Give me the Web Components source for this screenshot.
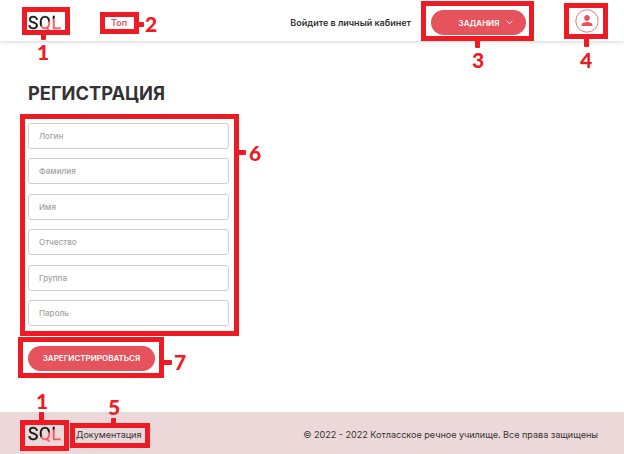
<!DOCTYPE html>
<html lang="ru">
<head>
<meta charset="utf-8">
<title>Регистрация</title>
<style>
body{margin:0;background:#fff;font-family:Inter,"Liberation Sans",sans-serif;color:#333}
</style>
</head>
<body>
<registration-page></registration-page>
<script>
const define=(name,html,setup)=>customElements.define(name,class extends HTMLElement{
  connectedCallback(){
    if(this.shadowRoot)return;
    const t=document.createElement('template');
    t.innerHTML=html;
    this.attachShadow({mode:'open'}).append(t.content.cloneNode(true));
    if(setup)setup(this);
  }
});

define('sql-logo',`<style>
:host{display:block;width:34px;height:18px;font:400 17.5px/18px Roboto,sans-serif;white-space:nowrap}
span{display:block;width:34px;height:18px;letter-spacing:.5px;color:transparent;background:linear-gradient(150deg,#111 0 50%,#fb5964 54%);-webkit-background-clip:text;background-clip:text;-webkit-text-stroke:.35px transparent}
</style><span><slot></slot></span>`);

define('pill-button',`<style>
:host{display:flex;align-items:center;justify-content:center;box-sizing:border-box;height:25px;border-radius:13px;background:#e6535c;color:#fff;font-weight:600;font-size:8px;line-height:12px;white-space:nowrap}
</style><slot></slot>`);

define('user-badge',`<style>
:host{display:block;width:24px;height:24px}svg{display:block}
</style><svg width="24" height="24" viewBox="0 0 24 24"><circle cx="12" cy="12" r="11.2" fill="#fff" stroke="#eb7a81"/><circle cx="12" cy="8.9" r="2.8" fill="#e6535c"/><path d="M6.6 17v-1.2c0-2 3.6-2.9 5.4-2.9s5.4.9 5.4 2.9V17z" fill="#e6535c"/></svg>`);

define('site-header',`<style>
:host{display:flex;align-items:center;box-sizing:border-box;height:41px;padding:4px 25px 0 28px;background:#fff;box-shadow:0 1px 4px rgba(0,0,0,.17)}
.top{margin-left:49px;color:#d9545c;font:600 9px/12px Inter,sans-serif}
.login{margin:0 20px 0 auto;font:600 9px/12px Inter,sans-serif;white-space:nowrap}
pill-button{width:95px;padding-left:15px;gap:7px}
user-badge{margin-left:49px;margin-top:-3px}
sql-logo{margin-top:0}
</style>
<sql-logo>SQL</sql-logo><span class="top">Топ</span><span class="login">Войдите в личный кабинет</span>
<pill-button><span>ЗАДАНИЯ</span><svg width="7" height="5" viewBox="0 0 7 5"><path d="M.6.8 3.5 3.7 6.4.8" fill="none" stroke="#fff" stroke-width=".9"/></svg></pill-button>
<user-badge></user-badge>`);

define('text-field',`<style>
:host{display:block}
input{display:block;box-sizing:border-box;width:201px;height:26px;margin:0;padding:0 10px;border:1px solid #cfcfcf;border-radius:3px;background:#fff;outline:0;font:500 8.1px/12px Inter,sans-serif;color:#333}
input::placeholder{color:#a2a2a2;opacity:1}
</style><input>`,el=>{el.shadowRoot.querySelector('input').placeholder=el.getAttribute('label')});

define('registration-form',`<style>
:host{display:block;padding:41px 28px 0}
h1{margin:0;font:700 18.25px/22px Inter,sans-serif;color:#333}
.fields{display:grid;gap:9.4px;margin:19px 0 20px}
pill-button{width:127px}
</style>
<h1>РЕГИСТРАЦИЯ</h1>
<div class="fields"><text-field label="Логин"></text-field><text-field label="Фамилия"></text-field><text-field label="Имя"></text-field><text-field label="Отчество"></text-field><text-field label="Группа"></text-field><text-field label="Пароль"></text-field></div>
<pill-button>ЗАРЕГИСТРИРОВАТЬСЯ</pill-button>`);

define('site-footer',`<style>
:host{display:flex;align-items:center;box-sizing:border-box;height:42px;margin-top:auto;padding:4px 26px 0 28px;background:#ecd8d8;font:400 9.05px/12px Inter,sans-serif;white-space:nowrap}
.docs{margin-left:14px}.copy{margin-left:auto}
sql-logo{margin-top:-3px}
</style><sql-logo>SQL</sql-logo><span class="docs">Документация</span><span class="copy">© 2022 - 2022 Котласское речное училище. Все права защищены</span>`);

/* Callout: a numbered frame laid over a part of the page.
   box = x y w h, stub = x y w h, num = x y (top left of the digit cell) */
define('call-out',`<style>
:host{display:contents}
div,i,b{position:absolute;box-sizing:border-box}
div{border:5px solid #ed1c24}
i{background:#ed1c24;border-radius:1px}
b{width:14px;height:20px;text-align:center;font:900 21px/20px Lato,sans-serif;color:#ed1c24}
</style><div></div><i></i><b><slot></slot></b>`,el=>{
  const put=(sel,attr)=>{
    const [x,y,w,h]=el.getAttribute(attr).split(' ');
    const s=el.shadowRoot.querySelector(sel).style;
    s.left=x+'px';s.top=y+'px';
    if(w){s.width=w+'px';s.height=h+'px'}
  };
  put('div','box');put('i','stub');put('b','num');
});

define('registration-page',`<style>
:host{display:flex;flex-direction:column;position:relative;width:624px;height:454px;overflow:hidden}
</style>
<site-header></site-header>
<registration-form></registration-form>
<site-footer></site-footer>
<call-out box="22 7 48 28" stub="41 34 5 6" num="36 42">1</call-out>
<call-out box="100 12 39 22" stub="138 22 6 5" num="144 14">2</call-out>
<call-out box="421 1 113 40" stub="475 40 5 8" num="471 50">3</call-out>
<call-out box="564 3 44 36" stub="584 38 5 9" num="579 50">4</call-out>
<call-out box="20 114 219 222" stub="238 150 8 5" num="248 143">6</call-out>
<call-out box="18 337 146 41" stub="163 360 9 5" num="173 352">7</call-out>
<call-out box="20 420 49 31" stub="39 412 5 9" num="35 391">1</call-out>
<call-out box="70 423 80 25" stub="111 418 5 6" num="107 397">5</call-out>`);
</script>
</body>
</html>
